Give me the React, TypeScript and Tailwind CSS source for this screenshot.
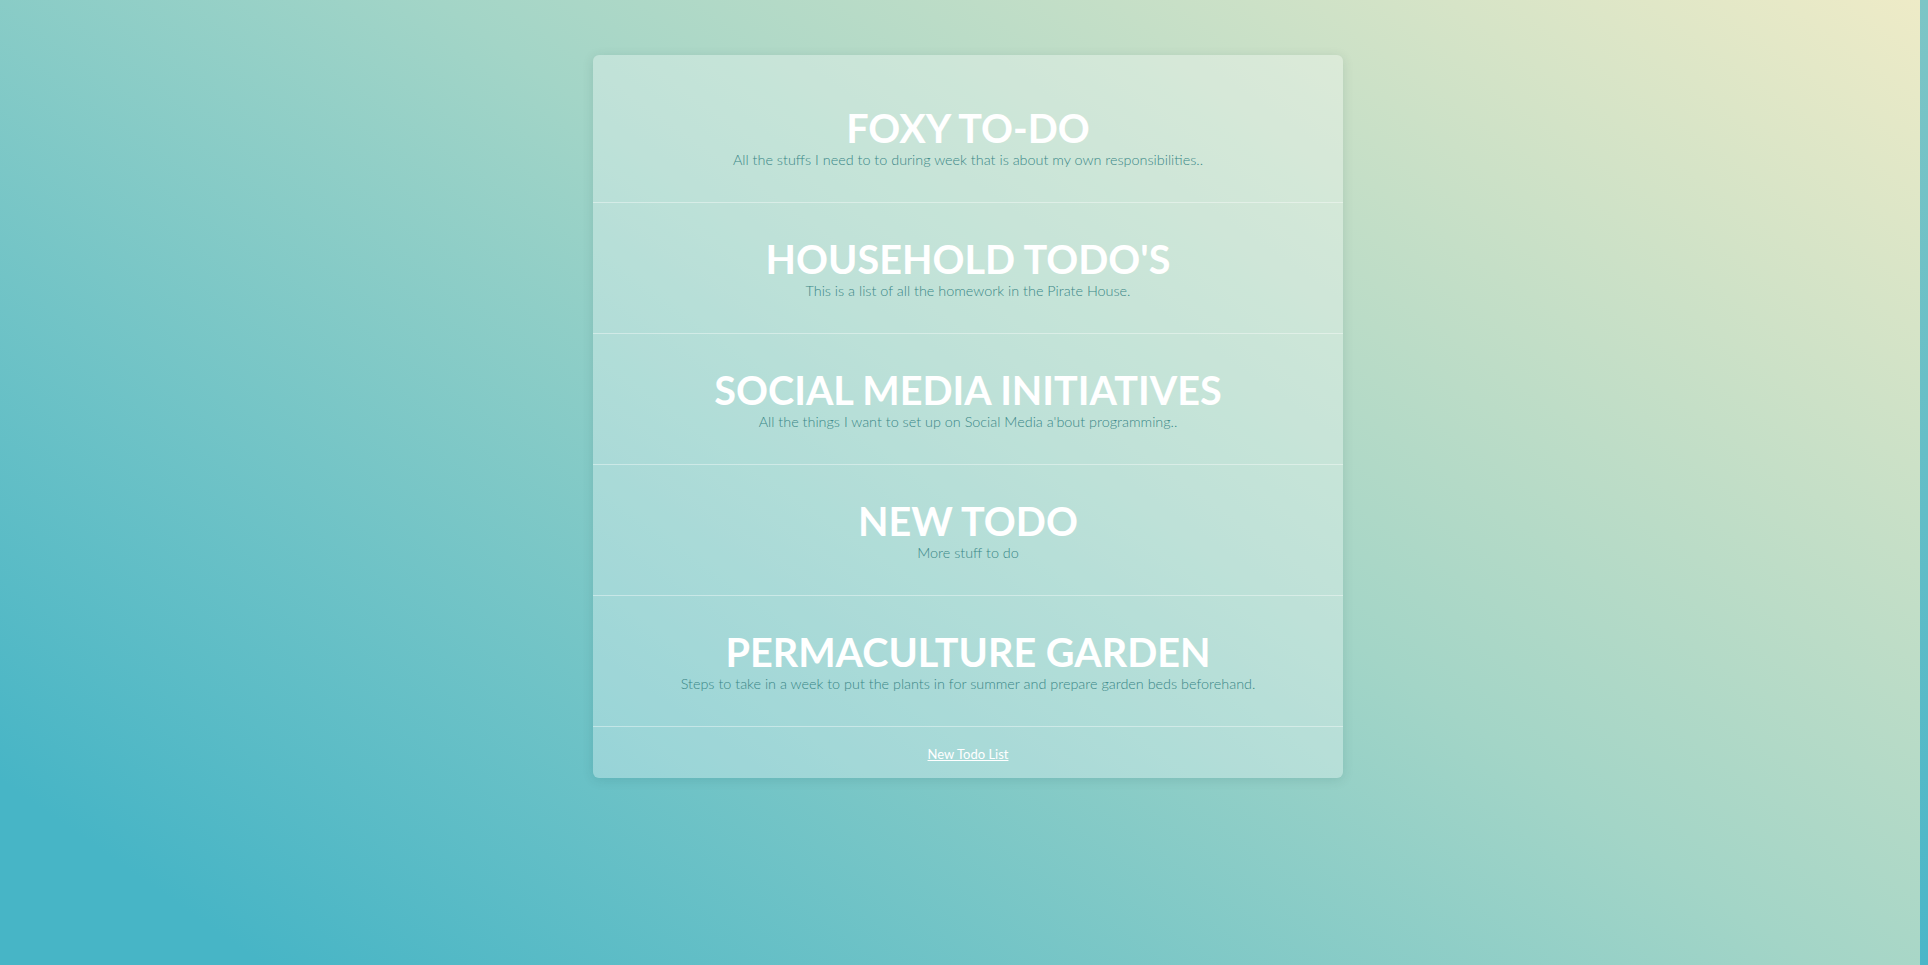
import React from "react";

const lists = [
  { title: "FOXY TO-DO", desc: "All the stuffs I need to to during week that is about my own responsibilities.." },
  { title: "HOUSEHOLD TODO'S", desc: "This is a list of all the homework in the Pirate House." },
  { title: "SOCIAL MEDIA INITIATIVES", desc: "All the things I want to set up on Social Media a'bout programming.." },
  { title: "NEW TODO", desc: "More stuff to do" },
  { title: "PERMACULTURE GARDEN", desc: "Steps to take in a week to put the plants in for summer and prepare garden beds beforehand." },
];

export default function App() {
  return (
    <div className="flex h-[965px] w-full overflow-hidden font-['Lato','Noto_Sans',sans-serif]">
      <div className="flex-1 flex justify-center items-start bg-[linear-gradient(35deg,#47b5c6_8%,#a3d5c7_55%,#eeebc7_100%)]">
        <div className="ml-[16px] mt-[55px] w-[750px] rounded-[6px] bg-white/30 pt-[17px] shadow-[0_2px_12px_rgba(0,60,60,0.12)]">
          {lists.map((l) => (
            <div
              key={l.title}
              className="flex flex-col items-center border-b border-white/40 pt-[35px] pb-[31px] text-center"
            >
              <div className="text-[39.6px] leading-[42px] font-bold text-white">{l.title}</div>
              <div className="text-[14.4px] leading-[22px] font-light text-[#3a8787]">{l.desc}</div>
            </div>
          ))}
          <div className="flex h-[51px] items-center justify-center pt-[5px]">
            <a href="#" className="text-[13px] text-white underline">
              New Todo List
            </a>
          </div>
        </div>
      </div>
      <div className="w-[8px] h-full bg-[linear-gradient(180deg,#7dc5c6,#4ab6c8)]" />
    </div>
  );
}
